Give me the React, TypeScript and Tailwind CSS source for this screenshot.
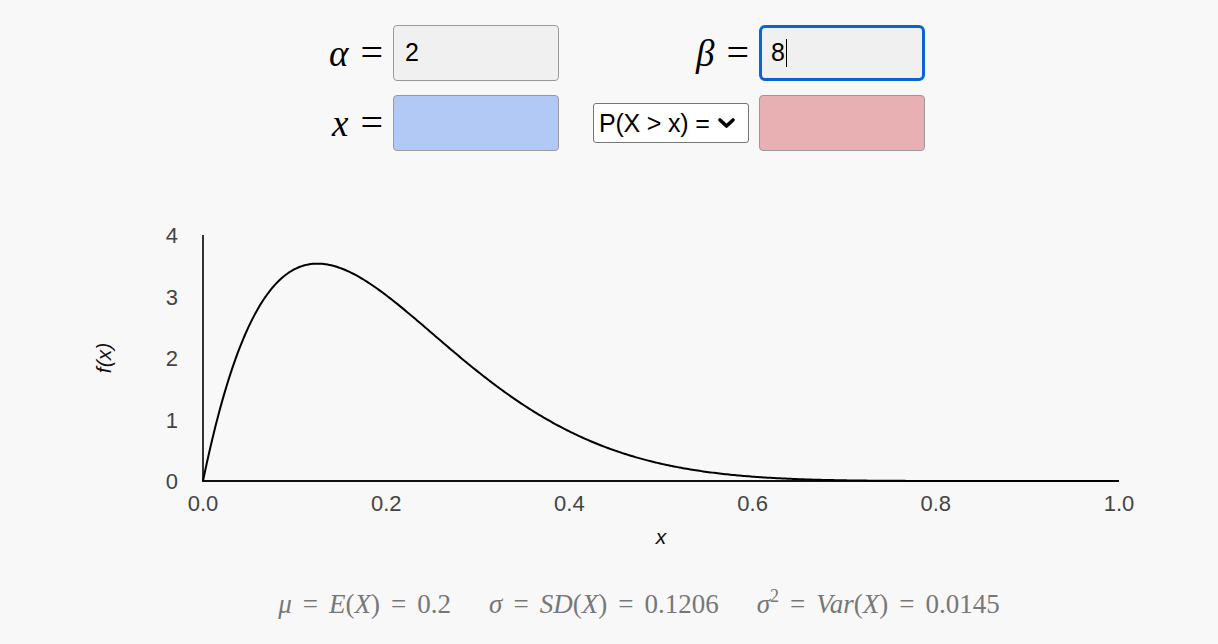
import React from "react";

const SVG_TOP = 160;
const X0 = 203;
const X1 = 1119;
const Y0 = 481 - SVG_TOP;
const YTOP = 235 - SVG_TOP;
const PX_PER_Y = (Y0 - YTOP) / 4;

function curvePath() {
  const pts: string[] = [];
  const n = 500;
  for (let i = 0; i <= n; i++) {
    const x = i / n;
    const y = 72 * x * Math.pow(1 - x, 7);
    const px = X0 + x * (X1 - X0);
    const py = Y0 - y * PX_PER_Y;
    pts.push(`${i === 0 ? "M" : "L"}${px.toFixed(2)},${py.toFixed(2)}`);
  }
  return pts.join(" ");
}

const mathFont = { fontFamily: '"Liberation Serif", "DejaVu Serif", serif' };

function MathLabel({ sym }: { sym: string }) {
  return (
    <div
      className="flex items-center justify-end gap-[12px] text-black leading-none"
      style={mathFont}
    >
      <span className="italic text-[37px]">{sym}</span>
      <span className="text-[40px]">=</span>
    </div>
  );
}

function Eq() {
  return <span className="mx-[11px]">=</span>;
}

export default function App() {
  const xTicks = [0, 0.2, 0.4, 0.6, 0.8, 1.0];
  const yTicks = [0, 1, 2, 3, 4];
  return (
    <div
      className="w-[1218px] h-[644px] bg-[#f8f8f8] overflow-hidden"
      style={{ fontFamily: '"Liberation Sans", Arial, sans-serif' }}
    >
      <div className="pt-[25px] pl-[303px]">
        <div className="grid grid-cols-[80px_166px_180px_166px] grid-rows-[56px_56px] gap-x-[10px] gap-y-[14px]">
          <MathLabel sym="α" />
          <div className="h-[56px] rounded-[4px] border-[1.5px] border-[#9a9a9a] bg-[#f0f0f0] flex items-center pl-[11px] text-[25px] text-black">
            2
          </div>
          <div className="flex items-center justify-end">
            <MathLabel sym="β" />
          </div>
          <div className="h-[56px] rounded-[6px] border-[3px] border-[#0b63d6] bg-[#f0f0f0] flex items-center pl-[9px] text-[25px] text-black">
            <span>8</span>
            <span className="inline-block w-[1.5px] h-[28px] bg-black ml-[1px]" />
          </div>

          <MathLabel sym="x" />
          <div className="h-[56px] rounded-[4px] border-[1.5px] border-[#9a9a9a] bg-[#b3c9f5]" />
          <div className="flex items-center justify-end">
            <div className="h-[40px] w-[156px] rounded-[3px] border border-[#767676] bg-white flex items-center pl-[5px] gap-[7px] text-[25px] text-black leading-none">
              <span className="tracking-[-0.2px] whitespace-nowrap">P(X &gt; x) =</span>
              <svg width="19" height="12" viewBox="0 0 19 12" className="shrink-0">
                <path d="M3 3 L9.5 9 L16 3" fill="none" stroke="black" strokeWidth="3.6" strokeLinecap="round" strokeLinejoin="round" />
              </svg>
            </div>
          </div>
          <div className="h-[56px] rounded-[4px] border-[1.5px] border-[#9a9a9a] bg-[#e8b0b2]" />
        </div>
      </div>

      <svg width="1218" height="420" className="block mt-[9px]" viewBox="0 0 1218 420">
        <line x1={X0} y1={YTOP} x2={X0} y2={Y0 + 1} stroke="#333" strokeWidth="2" />
        <line x1={X0 - 1} y1={Y0} x2={X1} y2={Y0} stroke="#111" strokeWidth="2" />
        <path d={curvePath()} fill="none" stroke="black" strokeWidth="2" />
        {yTicks.map((t) => (
          <text
            key={t}
            x={178}
            y={Y0 - t * PX_PER_Y + 8}
            textAnchor="end"
            fontSize="22"
            fill="#444"
            fontFamily='"Liberation Sans", Arial, sans-serif'
          >
            {t}
          </text>
        ))}
        {xTicks.map((t) => (
          <text
            key={t}
            x={X0 + t * (X1 - X0)}
            y={Y0 + 30}
            textAnchor="middle"
            fontSize="22"
            fill="#444"
            fontFamily='"Liberation Sans", Arial, sans-serif'
          >
            {t.toFixed(1)}
          </text>
        ))}
        <text
          x={661}
          y={Y0 + 63}
          textAnchor="middle"
          fontSize="21"
          fontStyle="italic"
          fill="#111"
          fontFamily='"Liberation Sans", Arial, sans-serif'
        >
          x
        </text>
        <text
          transform={`translate(111, ${(Y0 + YTOP) / 2}) rotate(-90)`}
          textAnchor="middle"
          fontSize="21"
          fontStyle="italic"
          fill="#111"
          fontFamily='"Liberation Sans", Arial, sans-serif'
        >
          f(x)
        </text>
      </svg>

      <div
        className="flex justify-center pl-[60px] mt-[11px] text-[27px] text-[#777] leading-none gap-[38px]"
        style={mathFont}
      >
        <span>
          <i>μ</i>
          <Eq />
          <i>E</i>(<i>X</i>)<Eq />0.2
        </span>
        <span>
          <i>σ</i>
          <Eq />
          <i>SD</i>(<i>X</i>)<Eq />0.1206
        </span>
        <span>
          <i>σ</i>
          <sup className="text-[18px] relative -top-[11px]">2</sup>
          <Eq />
          <i>Var</i>(<i>X</i>)<Eq />0.0145
        </span>
      </div>
    </div>
  );
}
